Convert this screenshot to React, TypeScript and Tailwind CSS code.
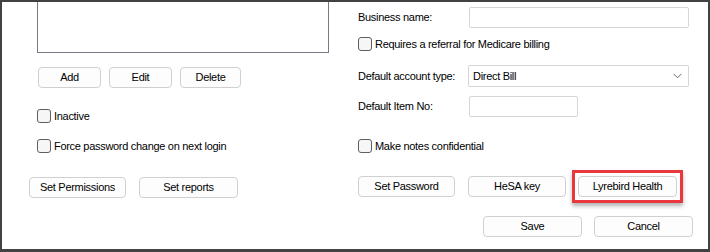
const btn =
  'h-[21px] rounded-[4px] border border-[#d0d0d0] bg-[#fdfdfd] text-[11px] tracking-[-0.3px] text-black flex items-center justify-center leading-none whitespace-nowrap';

const label = 'text-[11px] tracking-[-0.3px] text-black whitespace-nowrap';

function Check({ text }: { text: string }) {
  return (
    <div className="flex items-center gap-[3px]">
      <span className="w-[14px] h-[14px] rounded-[3px] border border-[#5f5f5f] bg-[#f6f6f6]" />
      <span className={`${label} leading-none`}>{text}</span>
    </div>
  );
}

export default function App() {
  return (
    <div
      className="w-[710px] h-[252px] bg-white border-x-2 border-t-2 border-b-[3px] border-[#424242] flex overflow-hidden"
      style={{ fontFamily: '"Liberation Sans", Arial, sans-serif' }}
    >
      {/* left column */}
      <div className="w-[354px] pl-[27px] flex flex-col">
        <div className="ml-[8px] w-[292px] h-[51px] border-x border-b border-[#7a7a86]" />
        <div className="ml-[9px] mt-[14px] flex gap-[8px]">
          <div className={`${btn} w-[63px]`}>Add</div>
          <div className={`${btn} w-[63px]`}>Edit</div>
          <div className={`${btn} w-[61px]`}>Delete</div>
        </div>
        <div className="ml-[8px] mt-[21px]">
          <Check text="Inactive" />
        </div>
        <div className="ml-[8px] mt-[16px]">
          <Check text="Force password change on next login" />
        </div>
        <div className="mt-[24px] flex gap-[13px]">
          <div className={`${btn} w-[97px]`}>Set Permissions</div>
          <div className={`${btn} w-[99px]`}>Set reports</div>
        </div>
      </div>

      {/* right column */}
      <div className="flex-1 pl-[2px] flex flex-col">
        <div className="mt-[5px] flex items-center">
          <span className={`${label} w-[111px]`}>Business name:</span>
          <div className="w-[220px] h-[21px] border border-[#d6d6d6] rounded-[2px]" />
        </div>
        <div className="mt-[9px]">
          <Check text="Requires a referral for Medicare billing" />
        </div>
        <div className="mt-[14px] flex items-center">
          <span className={`${label} w-[110px]`}>Default account type:</span>
          <div className="w-[221px] h-[22px] border border-[#d6d6d6] rounded-[2px] flex items-center justify-between pl-[4px] pr-[6px]">
            <span className={label}>Direct Bill</span>
            <svg width="9" height="6" viewBox="0 0 9 6" fill="none">
              <path d="M0.5 0.8 L4.5 4.8 L8.5 0.8" stroke="#6b6b6b" strokeWidth="1" />
            </svg>
          </div>
        </div>
        <div className="mt-[9px] flex items-center">
          <span className={`${label} w-[111px]`}>Default Item No:</span>
          <div className="w-[109px] h-[21px] border border-[#d6d6d6] rounded-[2px]" />
        </div>
        <div className="mt-[22px]">
          <Check text="Make notes confidential" />
        </div>
        <div className="mt-[23px] flex items-center h-[21px]">
          <div className={`${btn} w-[97px]`}>Set Password</div>
          <div className={`${btn} w-[98px] ml-[13px]`}>HeSA key</div>
          <div className="ml-[6px] p-[3px] border-[3px] border-[#e8383d] shadow-[0_3px_4px_rgba(0,0,0,0.3)]">
            <div className={`${btn} w-[99px] border-[#0f67b8]`}>Lyrebird Health</div>
          </div>
        </div>
        <div className="mt-[19px] flex gap-[12px] pl-[125px]">
          <div className={`${btn} w-[99px] h-[20px]`}>Save</div>
          <div className={`${btn} w-[99px] h-[20px]`}>Cancel</div>
        </div>
      </div>
    </div>
  );
}
